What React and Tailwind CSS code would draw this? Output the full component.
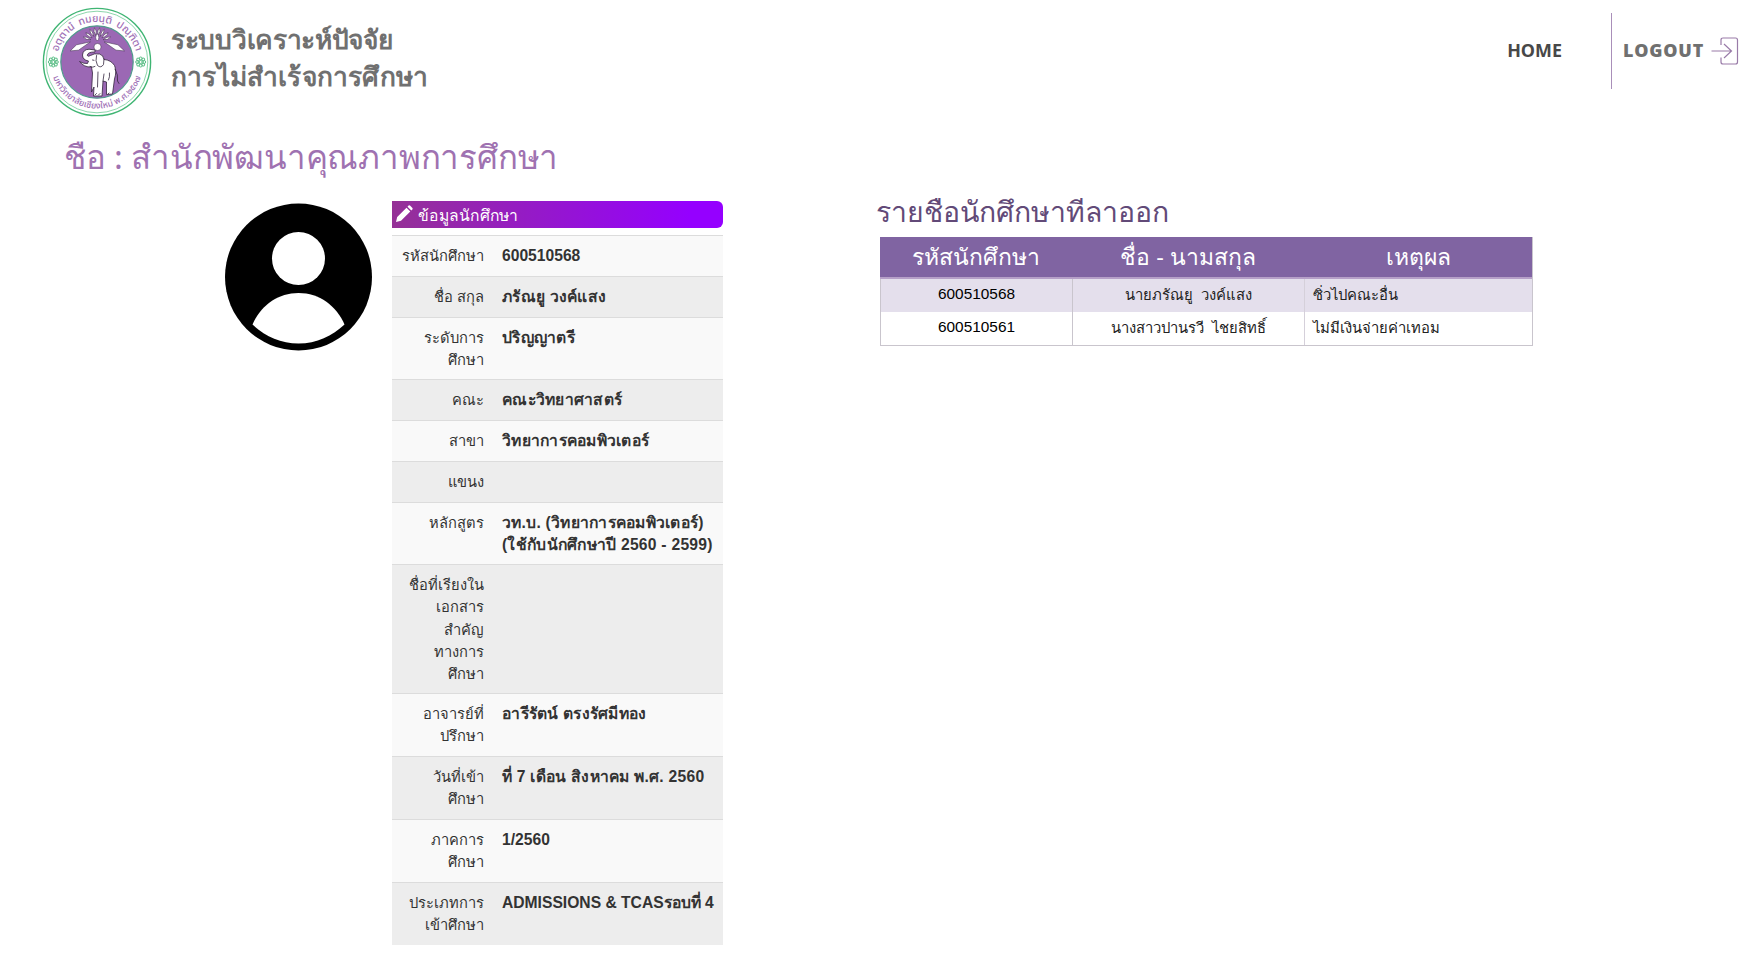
import React from "react";

const studentRows = [
  { label: ["รหัสนักศึกษา"], value: ["600510568"] },
  { label: ["ชื่อ สกุล"], value: ["ภรัณยู วงค์แสง"], spaced: true },
  { label: ["ระดับการ", "ศึกษา"], value: ["ปริญญาตรี"], spaced: true },
  { label: ["คณะ"], value: ["คณะวิทยาศาสตร์"], spaced: true },
  { label: ["สาขา"], value: ["วิทยาการคอมพิวเตอร์"], spaced: true },
  { label: ["แขนง"], value: [] },
  { label: ["หลักสูตร"], value: ["วท.บ. (วิทยาการคอมพิวเตอร์)", "(ใช้กับนักศึกษาปี 2560 - 2599)"], spaced: true },
  { label: ["ชื่อที่เรียงใน", "เอกสาร", "สำคัญ", "ทางการ", "ศึกษา"], value: [] },
  { label: ["อาจารย์ที่", "ปรึกษา"], value: ["อารีรัตน์ ตรงรัศมีทอง"], spaced: true },
  { label: ["วันที่เข้า", "ศึกษา"], value: ["ที่ 7 เดือน สิงหาคม พ.ศ. 2560"], spaced: true },
  { label: ["ภาคการ", "ศึกษา"], value: ["1/2560"] },
  { label: ["ประเภทการ", "เข้าศึกษา"], value: ["ADMISSIONS & TCASรอบที่ 4"] },
];

function Seal() {
  return (
    <svg viewBox="0 0 110 110" className="h-[110px] w-[110px] shrink-0">
      <defs>
        <path id="sealTop" d="M 15 60 A 40.300 40.300 0 1 1 95 60" />
        <path id="sealBottom" d="M 9 50 A 46.300 46.300 0 1 0 101 50" />
      </defs>
      <circle cx="55" cy="55" r="53.6" fill="#fff" stroke="#3fb573" strokeWidth="1.4" />
      <circle cx="55" cy="55" r="50.8" fill="none" stroke="#7fd0a2" strokeWidth="0.9" />
      <circle cx="55" cy="55" r="36.2" fill="#9b68b4" stroke="#4f9a8c" strokeWidth="1.2" />
      <g fill="#a070b6" textAnchor="middle" fontWeight="500" className="font-['Noto_Sans_Thai','Noto_Sans',sans-serif]">
        <text fontSize="10.4" wordSpacing="2"><textPath href="#sealTop" startOffset="50%">อตฺตานํ ทมยนฺติ ปณฺฑิตา</textPath></text>
        <text fontSize="8.8"><textPath href="#sealBottom" startOffset="50%">มหาวิทยาลัยเชียงใหม่ พ.ศ.๒๕๐๗</textPath></text>
      </g>
      {[11.3, 98.7].map((x) => (
        <g key={x} fill="none" stroke="#5dbf88" strokeWidth="1">
          <circle cx={x} cy="55" r="1.5" />
          {[0, 45, 90, 135, 180, 225, 270, 315].map((a) => (
            <circle key={a} cx={x} cy="51.4" r="1.4" transform={`rotate(${a} ${x} 55)`} />
          ))}
        </g>
      ))}
      <g fill="#fff" stroke="#4b3659" strokeWidth="0.6">
        {[-70, -50, -30, -10, 10, 30, 50, 70].map((a) => (
          <path key={a} d="M55 28.5 Q52.800 23.500 55 20.500 Q57.200 23.500 55 28.5Z" transform={`rotate(${a} 55 35)`} />
        ))}
        <path d="M48.500 34.800 L34.500 37.800 L28.200 43.900 L36.500 43.200Z" />
        <path d="M62 34.800 L76 37.800 L82.500 43.900 L74 43.200Z" />
        <path d="M55.300 26.500 Q58.500 31 55.300 34 Q52 31 55.300 26.500Z" />
        <circle cx="55.500" cy="40" r="3.6" />
      </g>
      <path
        d="M37.500 54.500 Q42 57 45.500 56.500 L46.500 54 Q40.500 53 40.500 48 Q41 42.500 47 42.200 L53 43 L53 45 Q45.500 44.800 45.300 48.500 Q46 50 48.500 48.500 Q52 46 57.500 47 Q61.500 48 62 52.500 Q69 53 72.500 58.500 Q75 64 72.500 72 L70.500 87 L64.500 87.500 L64.500 75 L61 74 L60 89 L51.500 89 L52 80 L49.500 85 L50.500 66 L49.500 60 Q42 60.500 37.500 54.500Z"
        fill="#fff" stroke="#33263d" strokeWidth="0.8" strokeLinejoin="round"
      />
      <path
        d="M54.500 48.500 Q53 54 55.500 58.500 Q59 61.500 61.500 57.500 L62 52 M50.500 53 L52 53.300 M48 59.500 Q51 61 53 59.500 M56 65 L55.500 80 M61 74 L62 67 M66.500 73 Q68 70 67.500 66 M73 62 Q76.500 68 75.500 74 L77 76.500 M53 88 L54.500 86.500 M56.500 88 L58 86.500 M66 87 L67 86"
        fill="none" stroke="#33263d" strokeWidth="0.8" strokeLinecap="round"
      />
    </svg>
  );
}

function Avatar() {
  return (
    <svg viewBox="0 0 148 148" className="mt-[2px] h-[148px] w-[148px] shrink-0">
      <circle cx="73.500" cy="74" r="73.500" fill="#000" />
      <circle cx="73.500" cy="55.500" r="26.500" fill="#fff" />
      <path d="M27.500 121.500 C35.500 103 52.500 90 73.500 90 C94.500 90 111.500 103 119.500 121.500 C107.500 133 91.500 140.500 73.500 140.500 C55.500 140.500 39.500 133 27.500 121.500Z" fill="#fff" />
    </svg>
  );
}

function Header() {
  return (
    <header className="flex h-[125px] items-start">
      <div className="flex flex-1 pl-[42px] pt-[7px]">
        <Seal />
        <div className="ml-[19px] mt-[14px] whitespace-nowrap font-['Noto_Sans',sans-serif] text-[26.300px] font-bold leading-[37px] text-[#707070]">
          <div className="tracking-[-0.300px]">ระบบวิเคราะห์ปัจจัย</div>
          <div className="tracking-[0.200px]">การไม่สำเร้จการศึกษา</div>
        </div>
      </div>
      <nav className="flex pt-[13px] font-['Open_Sans',sans-serif] text-[17.900px] font-bold">
        <a className="mr-[49px] mt-[25px] leading-[24px] text-[#484848]">HOME</a>
        <div className="flex h-[76px] border-l border-[#a98fb9] pl-[11px] pr-[14px]">
          <a className="mt-[25px] w-[83px] font-extrabold leading-[24px] tracking-[0.800px] text-[#707070]">LOGOUT</a>
          <svg viewBox="0 0 28 28" className="ml-[5px] mt-[24px] h-[28px] w-[28px]" fill="none" stroke="#997ba8" strokeWidth="1.200">
            <path d="M10 8 V3 Q10 1 12 1 H24.500 Q26.500 1 26.500 3 V25 Q26.500 27 24.500 27 H12 Q10 27 10 25 V20.500 M0.500 14 H20 M13 7 L20.500 14 L13 21" />
          </svg>
        </div>
      </nav>
    </header>
  );
}

function StudentCard() {
  return (
    <section className="ml-[19px] w-[331px] font-['Liberation_Sans',sans-serif] text-[15.650px] leading-[22.060px] text-[#333]">
      <div className="mb-[7px] flex h-[27px] items-center rounded-r-[6px] bg-linear-to-r/srgb from-[#953196] to-[#9500ff] to-90% pl-[4px] text-white">
        <svg viewBox="0 0 17 17" className="-mt-[2px] h-[17px] w-[17px]" fill="#fff">
          <path d="M0 17 L1.200 12 L10.500 2.700 L14.300 6.500 L5 15.800Z M11.500 1.700 L12.600 0.600 Q13.300 0 14 0.600 L16.400 3 Q17 3.700 16.400 4.400 L15.300 5.500Z" />
        </svg>
        <span className="ml-[5px] mt-[3px] tracking-[0.250px]">ข้อมูลนักศึกษา</span>
      </div>
      {studentRows.map((row) => (
        <div key={row.label.join("")} className="flex border-t border-[#dcdcdc] pb-[8.700px] pt-[9px] odd:bg-[#ededed] even:bg-[#f9f9f9]">
          <div className="w-[92px] whitespace-nowrap text-right text-[14.700px]">
            {row.label.map((line) => <div key={line}>{line}</div>)}
          </div>
          <div className={row.spaced ? "ml-[18px] whitespace-nowrap font-bold tracking-[0.260px]" : "ml-[18px] whitespace-nowrap font-bold"}>
            {row.value.map((line) => <div key={line}>{line}</div>)}
          </div>
        </div>
      ))}
    </section>
  );
}

function Withdrawals() {
  return (
    <section className="ml-[153px]">
      <h2 className="-mt-[10px] h-[46px] whitespace-nowrap font-['Noto_Sans',sans-serif] text-[28.400px] leading-[40px] text-[#624a78]">รายชือนักศึกษาทีลาออก</h2>
      <div className="ml-[4px] w-[653px] whitespace-nowrap border-b border-r border-[#c9c5cd] font-['Liberation_Sans',sans-serif]">
        <div className="grid h-[42px] grid-cols-[192px_232px_1fr] border-b-2 border-[#b6a0c8] bg-[#8064a2] text-center text-[22.900px] leading-[40px] text-white">
          <div>รหัสนักศึกษา</div>
          <div>ชื่อ - นามสกุล</div>
          <div>เหตุผล</div>
        </div>
        {[
          ["600510568", "นายภรัณยู  วงค์แสง", "ซิ่วไปคณะอื่น"],
          ["600510561", "นางสาวปานรวี  ไชยสิทธิ์", "ไม่มีเงินจ่ายค่าเทอม"],
        ].map((r) => (
          <div key={r[0]} className="grid h-[33px] grid-cols-[192px_232px_1fr] text-center text-[14.800px] leading-[32px] text-[#222] even:bg-[#e4dfec]">
            <div className="border-l border-[#c9c5cd] text-[15.400px] leading-[29px] text-black">{r[0]}</div>
            <div className="whitespace-pre border-l border-[#c9c5cd]">{r[1]}</div>
            <div className="border-l border-[#d5d0da] pl-[8px] text-left">{r[2]}</div>
          </div>
        ))}
      </div>
    </section>
  );
}

export default function App() {
  return (
    <div className="h-[980px] w-[1753px] overflow-hidden bg-white">
      <Header />
      <h1 className="h-[76px] whitespace-nowrap pl-[64px] pt-[8px] font-['Noto_Sans',sans-serif] text-[33px] leading-[48px] tracking-[-0.200px] text-[#9f72b1]">ชือ : สำนักพัฒนาคุณภาพการศึกษา</h1>
      <main className="flex items-start pl-[225px]">
        <Avatar />
        <StudentCard />
        <Withdrawals />
      </main>
    </div>
  );
}
